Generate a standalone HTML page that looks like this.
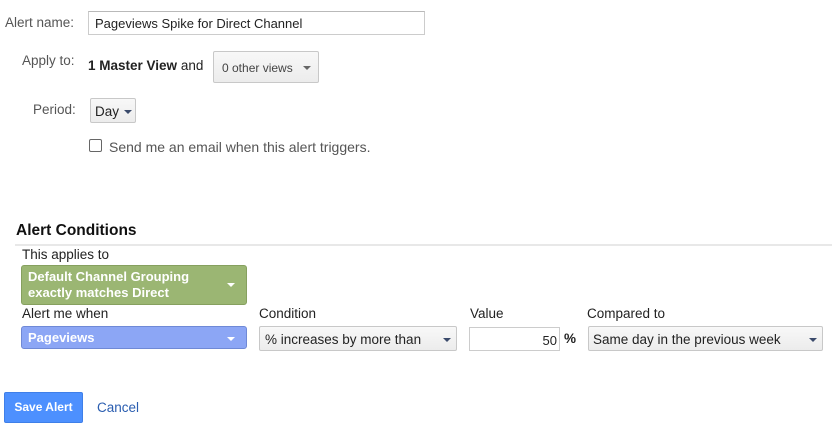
<!DOCTYPE html>
<html><head><meta charset="utf-8"><style>
*{margin:0;padding:0;box-sizing:border-box}
body{width:832px;height:428px;background:#fff;font-family:"Liberation Sans",Arial,sans-serif;position:relative;overflow:hidden;color:#222}
.a{position:absolute;white-space:nowrap}
.lbl{color:#555;font-size:13.5px}
.sel{position:absolute;border:1px solid #c8c8c8;border-radius:2px;background:linear-gradient(#f8f8f8,#ececec);font-size:13px;color:#333}
.tri{position:absolute;width:0;height:0;border-left:4px solid transparent;border-right:4px solid transparent;border-top:4px solid #444}
.wt{border-top-color:#fff}
</style></head><body>
<div class="a lbl" style="left:5px;top:15px;">Alert name:</div>
<div class="a" style="left:88px;top:11px;width:337px;height:24px;border:1px solid #ccc;border-top-color:#b9b9b9;font-size:13px;padding:4px 0 0 6px;color:#222">Pageviews Spike for Direct Channel</div>

<div class="a lbl" style="left:22px;top:53px;">Apply to:</div>
<div class="a" style="left:88px;top:58px;font-size:13.5px;"><b>1 Master View</b> and</div>
<div class="sel" style="left:213px;top:51px;width:106px;height:32px;"><span class="a" style="left:8px;top:9px;font-size:12px;color:#444">0 other views</span><span class="tri" style="left:89px;top:14px;border-top-color:#666"></span></div>

<div class="a lbl" style="left:33px;top:102px;">Period:</div>
<div class="sel" style="left:90px;top:98px;width:46px;height:25px;"><span class="a" style="left:4px;top:5px;font-size:13.5px;color:#222">Day</span><span class="tri" style="left:33px;top:11px;border-top-color:#3a4a6b"></span></div>

<div class="a" style="left:89px;top:139px;width:13px;height:13px;border:1px solid #666;border-radius:2px;"></div>
<div class="a lbl" style="left:109px;top:139px;font-size:14px;">Send me an email when this alert triggers.</div>

<div class="a" style="left:16px;top:222px;font-size:15.5px;font-weight:bold;color:#111">Alert Conditions</div>
<div class="a" style="left:15px;top:244px;width:817px;height:2px;background:#e8e8e8"></div>
<div class="a" style="left:22px;top:247px;font-size:13.5px;color:#222">This applies to</div>
<div class="a" style="left:21px;top:265px;width:226px;height:40px;background:#9bb673;border:1px solid #86a05f;border-radius:3px;color:#fff;font-weight:bold;font-size:13px;line-height:16px;padding:3px 0 0 6px">Default Channel Grouping<br>exactly matches Direct<span class="tri wt" style="left:205px;top:17px"></span></div>

<div class="a" style="left:22px;top:306px;font-size:13.5px;color:#222">Alert me when</div>
<div class="a" style="left:21px;top:326px;width:226px;height:23px;background:#8ca6f5;border:1px solid #6f89d6;border-radius:3px;color:#fff;font-weight:bold;font-size:13px;padding:3px 0 0 6px">Pageviews<span class="tri wt" style="left:205px;top:10px"></span></div>

<div class="a" style="left:259px;top:306px;font-size:13.5px;color:#222">Condition</div>
<div class="sel" style="left:259px;top:326px;width:198px;height:25px;"><span class="a" style="left:5px;top:5px;font-size:13.5px;color:#222">% increases by more than</span><span class="tri" style="left:183px;top:11px;border-top-color:#3a4a6b"></span></div>

<div class="a" style="left:470px;top:306px;font-size:13.5px;color:#222">Value</div>
<div class="a" style="left:469px;top:327px;width:91px;height:24px;border:1px solid #ccc;font-size:13px;text-align:right;padding:5px 2px 0 0">50</div>
<div class="a" style="left:564px;top:331px;font-size:13.5px;font-weight:bold">%</div>

<div class="a" style="left:587px;top:306px;font-size:13.5px;color:#222">Compared to</div>
<div class="sel" style="left:588px;top:326px;width:235px;height:25px;"><span class="a" style="left:4px;top:5px;font-size:13.5px;color:#222">Same day in the previous week</span><span class="tri" style="left:220px;top:11px;border-top-color:#3a4a6b"></span></div>

<div class="a" style="left:4px;top:392px;width:79px;height:31px;background:#4d90fe;border:1px solid #3f7fe8;border-radius:2px;color:#fff;font-weight:bold;font-size:12px;text-align:center;line-height:29px">Save Alert</div>
<div class="a" style="left:97px;top:400px;font-size:13.5px;color:#2a5db0">Cancel</div>
</body></html>
